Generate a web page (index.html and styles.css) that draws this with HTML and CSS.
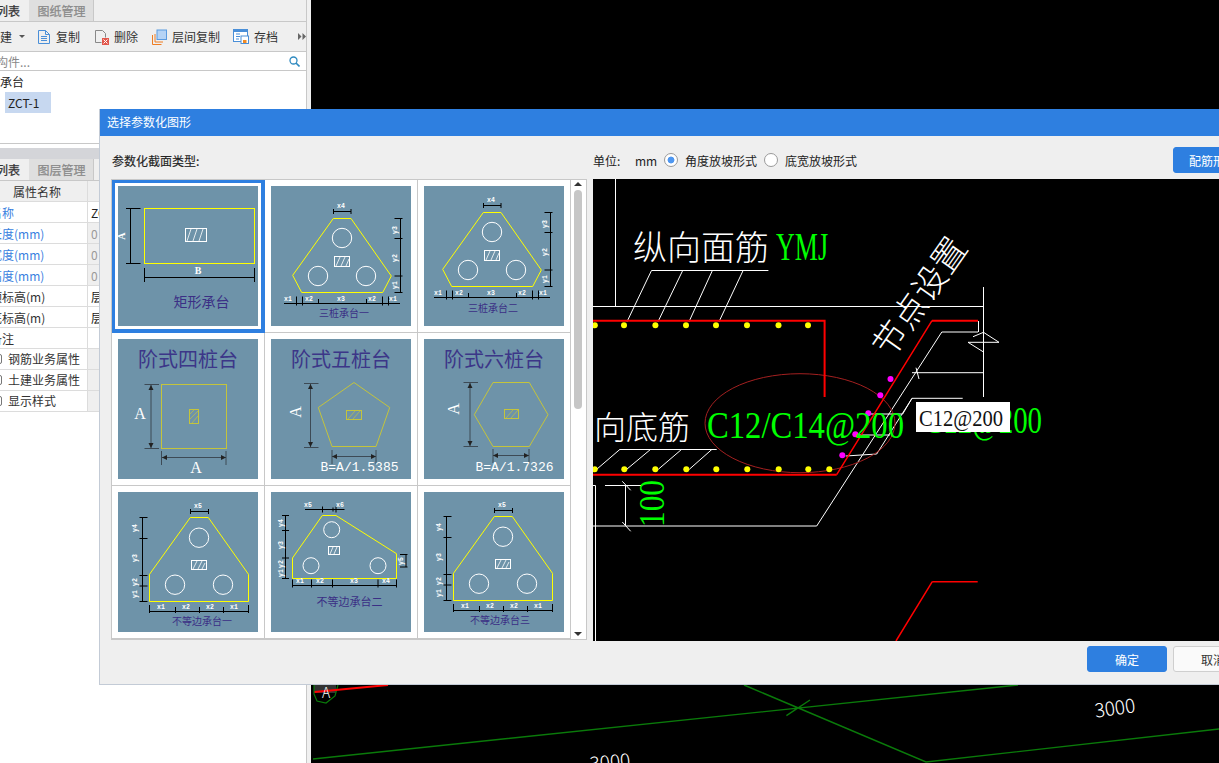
FILE: index.html
```html
<!DOCTYPE html>
<html lang="zh-CN">
<head>
<meta charset="utf-8">
<title>选择参数化图形</title>
<link rel="stylesheet" href="styles.css">
</head>
<body>
<div class="app">
  <aside class="side">
    <div class="tabs">
      <div class="tab tab-on"><span>构件列表</span></div>
      <div class="tab tab-off">图纸管理</div>
    </div>
    <div class="toolbar">
      <span class="tool tool-new">新建</span><span class="caret"></span>
      <span class="tool tool-copy">
        <svg class="ico" width="14" height="16" viewBox="0 0 14 16"><path class="i-blue" d="M1.5 1.5h7l4 4v9h-11z"/><path class="i-blue" d="M8.5 1.5v4h4M4 7.5h6M4 9.5h6M4 11.5h6"/></svg>复制</span>
      <span class="tool tool-del">
        <svg class="ico" width="15" height="16" viewBox="0 0 15 16"><path class="i-gray" d="M1.5 1.5h7l3 3v4M1.5 1.5v12h6"/><rect x="8" y="9" width="7" height="7" fill="#e2574c"/><path class="i-white" d="M9.5 10.5l4 4M13.5 10.5l-4 4"/></svg>删除</span>
      <span class="tool tool-floor">
        <svg class="ico" width="15" height="16" viewBox="0 0 15 16"><path class="i-orange" d="M.5 6v9.500h9M3 5v8h8"/><rect x="5" y="1" width="9.500" height="9.500" fill="#b5d3f5" stroke="#5b9be0"/></svg>层间复制</span>
      <span class="tool tool-save">
        <svg class="ico" width="16" height="15" viewBox="0 0 16 15"><rect x=".5" y=".5" width="14" height="12" fill="#fff" stroke="#4a8fd8"/><rect x=".5" y=".5" width="14" height="2.500" fill="#4a8fd8"/><path class="i-blue" d="M3 5h4M3 7.500h4M3 10h3"/><rect x="8" y="7" width="7.500" height="7.500" fill="#fff" stroke="#4a8fd8"/><rect x="10" y="11" width="3.500" height="3" fill="#f08a24"/></svg>存档</span>
      <svg class="more" width="8" height="7" viewBox="0 0 8 7"><path d="M0 0l3.500 3.500L0 7zM4.500 0L8 3.500 4.500 7z" fill="#666"/></svg>
    </div>
    <div class="search">
      <span class="placeholder">构件...</span>
      <svg class="search-ico" width="11" height="11" viewBox="0 0 11 11"><circle cx="4.500" cy="4.500" r="3.500" fill="none" stroke="#2f8ac0" stroke-width="1.300"/><path d="M7 7l3.500 3.500" stroke="#2f8ac0" stroke-width="1.600"/></svg>
    </div>
    <div class="tree">
      <div class="tree-root">承台</div>
      <div class="tree-item">ZCT-1</div>
    </div>
    <div class="spacer"></div>
    <div class="graybar"></div>
    <div class="tabs tabs-2">
      <div class="tab tab-on"><span>属性列表</span></div>
      <div class="tab tab-off">图层管理</div>
    </div>
    <div class="props">
      <div class="row head"><div class="k">属性名称</div><div class="v"></div></div>
      <div class="row"><div class="k blue"><span>名称</span></div><div class="v">ZCT-1</div></div>
      <div class="row"><div class="k blue"><span>长度(mm)</span></div><div class="v ro">0</div></div>
      <div class="row"><div class="k blue"><span>宽度(mm)</span></div><div class="v ro">0</div></div>
      <div class="row"><div class="k blue"><span>高度(mm)</span></div><div class="v ro">0</div></div>
      <div class="row"><div class="k"><span>顶标高(m)</span></div><div class="v">层底标高</div></div>
      <div class="row"><div class="k"><span>底标高(m)</span></div><div class="v">层底标高</div></div>
      <div class="row"><div class="k"><span>备注</span></div><div class="v"></div></div>
      <div class="row group"><div class="k"><i class="exp"></i>钢筋业务属性</div><div class="v"></div></div>
      <div class="row group"><div class="k"><i class="exp"></i>土建业务属性</div><div class="v"></div></div>
      <div class="row group"><div class="k"><i class="exp"></i>显示样式</div><div class="v"></div></div>
    </div>
  </aside>
  <div class="gutter"></div>
  <main class="canvas">
    <svg class="canvas-svg" width="908" height="763" viewBox="311 0 908 763">
      <path class="gl" d="M313 759L1018 685M744 685L926 762L1219 729M786.400 715.700L810 700"/>
      <path d="M314 685h22v8h-22z" fill="#333"/>
      <path d="M314 685v9l3 7 9 2 9-7 3-11" fill="none" stroke="#0a7a0a" stroke-width="1.200"/>
      <path d="M314.600 692L388 685" stroke="#f00" stroke-width="2" fill="none"/>
      <text class="cad-w" x="326" y="698" font-size="14" text-anchor="middle">A</text>
      <text class="cad-w" font-size="19" transform="rotate(-8 1115 709)" x="1115" y="715" text-anchor="middle">3000</text>
      <text class="cad-w" font-size="19" transform="rotate(-6 610 762)" x="610" y="769" text-anchor="middle">3000</text>
    </svg>
  </main>
</div>

<section class="dialog">
  <header class="dlg-title">选择参数化图形</header>
  <div class="dlg-head">
    <div class="dlg-label">参数化截面类型:</div>
    <div class="unit">单位:</div>
    <div class="unit-mm">mm</div>
    <label class="radio-wrap"><i class="radio radio-on"></i>角度放坡形式</label>
    <label class="radio-wrap"><i class="radio"></i>底宽放坡形式</label>
    <button class="btn btn-blue btn-right">配筋形式</button>
  </div>
  <div class="dlg-main">
    <div class="list">
      <div class="grid">
        <div class="cell selected">
          <svg class="thumb" viewBox="0 0 140 140">
            <rect class="y1" x="26.500" y="22.500" width="110" height="55"/>
            <path class="d" d="M12.500 22.500v55M8 22.500h14.500M8 77.500h14.500M26.500 91.500h110M26.500 82v14M136.500 82v14"/>
            <text class="big-l" transform="rotate(-90 7 50)" x="7" y="50" text-anchor="middle">A</text>
            <text class="big-l" x="80" y="88" text-anchor="middle">B</text>
            <rect class="wh" x="67.500" y="42.500" width="21" height="13"/>
            <path class="wt" d="M69 55l4-12M75 55l4-12M81 55l4-12"/>
            <text class="cap" x="83.500" y="121" font-size="14" text-anchor="middle">矩形承台</text>
          </svg>
        </div>
        <div class="cell">
          <svg class="thumb" viewBox="0 0 140 140">
            <use href="#tri"/>
            <text class="cap" x="73" y="131" font-size="10" text-anchor="middle">三桩承台一</text>
          </svg>
        </div>
        <div class="cell">
          <svg class="thumb" viewBox="0 0 140 140">
            <g transform="translate(-3 -6)"><use href="#tri"/></g>
            <text class="cap" x="69" y="126" font-size="10" text-anchor="middle">三桩承台二</text>
          </svg>
        </div>

        <div class="cell">
          <svg class="thumb" viewBox="0 0 140 140">
            <text class="step" x="70" y="28" text-anchor="middle">阶式四桩台</text>
            <rect class="o" x="43.500" y="45.500" width="65" height="64"/>
            <rect class="o" x="71.500" y="70.500" width="9" height="14"/>
            <path class="ot" d="M72 75l4-4M72 80l8-8M74 84l6-7"/>
            <path class="g" d="M33 46v63M26.500 45.500h14.500M26.500 109.500h14.500M44 118.500h64M43.500 112v14M108 112v14"/>
            <path class="ar" d="M33 46l-2.500 5h5zM33 109l-2.500-5h5zM44 118.500l5-2.500v5zM108 118.500l-5-2.500v5z"/>
            <text class="sf" x="22" y="80" text-anchor="middle">A</text>
            <text class="sf" x="78" y="134" text-anchor="middle">A</text>
          </svg>
        </div>
        <div class="cell">
          <svg class="thumb" viewBox="0 0 140 140">
            <text class="step" x="70" y="28" text-anchor="middle">阶式五桩台</text>
            <polygon class="o" points="83,43.500 118.700,68.500 105,107.500 61,107.500 47.300,68.500"/>
            <rect class="o" x="75.500" y="71.500" width="15" height="9"/>
            <path class="ot" d="M77 80l7-8M82 80l7-8"/>
            <path class="g" d="M39.500 45v63M33 44.500h14.500M33 108.500h14.500M61 117.500h44M61 111v14M105 111v14"/>
            <path class="ar" d="M39.500 45l-2.500 5h5zM39.500 108l-2.500-5h5zM61 117.500l5-2.500v5zM105 117.500l-5-2.500v5z"/>
            <text class="sf" transform="rotate(-90 30 73)" x="30" y="73" text-anchor="middle">A</text>
            <text class="form" x="88.500" y="132" text-anchor="middle">B=A/1.5385</text>
          </svg>
        </div>
        <div class="cell">
          <svg class="thumb" viewBox="0 0 140 140">
            <text class="step" x="70" y="28" text-anchor="middle">阶式六桩台</text>
            <polygon class="o" points="69,43.500 105.300,43.500 124,75.700 105.300,107.500 69,107.500 50.300,75.700"/>
            <rect class="o" x="80.500" y="70.500" width="14" height="9"/>
            <path class="ot" d="M82 79l7-8M87 79l7-8"/>
            <path class="g" d="M46 44v63M39.500 43.500h14.500M39.500 107.500h14.500M69 116.500h36M69 110v14M105 110v14"/>
            <path class="ar" d="M46 44l-2.500 5h5zM46 107l-2.500-5h5zM69 116.500l5-2.500v5zM105 116.500l-5-2.500v5z"/>
            <text class="sf" transform="rotate(-90 35 70)" x="35" y="70" text-anchor="middle">A</text>
            <text class="form" x="90.500" y="132" text-anchor="middle">B=A/1.7326</text>
          </svg>
        </div>

        <div class="cell">
          <svg class="thumb" viewBox="0 0 140 140">
            <use href="#uneq"/>
            <text class="cap" x="84" y="133" font-size="10" text-anchor="middle">不等边承台一</text>
          </svg>
        </div>
        <div class="cell">
          <svg class="thumb" viewBox="0 0 140 140">
            <polygon class="y1" points="51.300,23.500 65,23.500 125.500,61.700 125.500,86.500 21.500,86.500 21.500,66"/>
            <circle class="wh" cx="60.700" cy="37.700" r="8"/>
            <circle class="wh" cx="40" cy="73.700" r="8"/>
            <circle class="wh" cx="107" cy="73.700" r="8"/>
            <rect class="wh" x="57.500" y="54.500" width="11" height="8"/>
            <path class="wt" d="M59 62l3-7M63 62l3-7"/>
            <path class="d" d="M34 17.500h39.500M51.500 14.500v6M62 15.500v4M65 14.500v6M14.500 23.500v63M11 23.500h7M11 38.500h7M11 66h7M11 86.500h7M135 62.500v12.500M129 62.500h7.500M129 75h7.500M21.500 93.500h104M21.500 87.500v8M40.500 87.500v8M61.500 87.500v8M107 87.500v8M125.500 87.500v8"/>
            <text class="lbl" x="37" y="15" text-anchor="middle">x5</text>
            <text class="lbl" x="69" y="15" text-anchor="middle">x6</text>
            <text class="lbl" transform="rotate(-90 12 31)" x="12" y="31" text-anchor="middle">y4</text>
            <text class="lbl" transform="rotate(-90 12 53)" x="12" y="53" text-anchor="middle">y3</text>
            <text class="lbl" transform="rotate(-90 12 72)" x="12" y="72" text-anchor="middle">y2</text>
            <text class="lbl" transform="rotate(-90 12 81)" x="12" y="81" text-anchor="middle">y1</text>
            <text class="lbl" transform="rotate(-90 132 69)" x="132" y="69" text-anchor="middle">y5</text>
            <text class="lbl" x="29" y="91" text-anchor="middle">x1</text>
            <text class="lbl" x="49" y="91" text-anchor="middle">x2</text>
            <text class="lbl" x="83" y="91" text-anchor="middle">x3</text>
            <text class="lbl" x="115" y="91" text-anchor="middle">x4</text>
            <text class="cap" x="78.500" y="114" font-size="11" text-anchor="middle">不等边承台二</text>
          </svg>
        </div>
        <div class="cell">
          <svg class="thumb" viewBox="0 0 140 140">
            <g transform="translate(-2 -1)"><use href="#uneq"/></g>
            <text class="cap" x="76" y="132" font-size="10" text-anchor="middle">不等边承台三</text>
          </svg>
        </div>
      </div>
      <div class="scroll">
        <span class="arrow arrow-up"></span>
        <span class="thumbbar"></span>
        <span class="arrow arrow-down"></span>
      </div>
    </div>

    <div class="preview">
      <svg class="preview-svg" width="626" height="462" viewBox="593 179 626 462">
        <defs>
          <g id="tri">
            <polygon class="y1" points="62.300,32.500 80,32.500 120.300,90 111.700,106.500 30.700,106.500 21.700,89.300"/>
            <circle class="wh" cx="71" cy="52" r="9.700"/>
            <circle class="wh" cx="47" cy="90" r="9.700"/>
            <circle class="wh" cx="95" cy="90" r="9.700"/>
            <rect class="wh" x="63.500" y="70.500" width="15" height="10"/>
            <path class="wt" d="M65 80l4-9M70 80l4-9M75 80l3-7"/>
            <path class="d" d="M62.500 25.500h17.500M62.500 23v5M80 23v5M129.500 32.500v74M123.500 32.500h8M123.500 52.500h8M123.500 90h8M123.500 106.500h8M13 117.500h116M25.500 110.500v9M31.500 110.500v9M47.500 113v5M95.500 113v5M111.500 110.500v9M117.500 110.500v9"/>
            <text class="lbl" x="70" y="22" text-anchor="middle">x4</text>
            <text class="lbl" transform="rotate(-90 126 44)" x="126" y="44" text-anchor="middle">y3</text>
            <text class="lbl" transform="rotate(-90 126 72)" x="126" y="72" text-anchor="middle">y2</text>
            <text class="lbl" transform="rotate(-90 126 99)" x="126" y="99" text-anchor="middle">y1</text>
            <text class="lbl" x="17" y="115" text-anchor="middle">x1</text>
            <text class="lbl" x="38" y="115" text-anchor="middle">x2</text>
            <text class="lbl" x="70" y="115" text-anchor="middle">x3</text>
            <text class="lbl" x="101" y="115" text-anchor="middle">x2</text>
            <text class="lbl" x="122" y="115" text-anchor="middle">x1</text>
          </g>
          <g id="uneq">
            <polygon class="y1" points="72.300,25.500 90.300,25.500 130.500,82.300 130.500,109.500 31.500,109.500 31.500,82.300"/>
            <circle class="wh" cx="81" cy="45.700" r="9.700"/>
            <circle class="wh" cx="57" cy="92.700" r="9.700"/>
            <circle class="wh" cx="105" cy="92.700" r="9.700"/>
            <rect class="wh" x="73.500" y="68.500" width="15" height="9"/>
            <path class="wt" d="M75 77l4-8M80 77l4-8M84 77l3-6"/>
            <path class="d" d="M72.500 19.500h18M72.500 17v5M90.500 17v5M24.500 25.500v84M21.500 25.500h8M21.500 46.500h8M21.500 83.500h8M21.500 94h8M21.500 109.500h8M31.500 119.500h99M31.500 113v8M57.500 115v6M81.500 115v6M105.500 115v6M130.500 113v8"/>
            <text class="lbl" x="80" y="16" text-anchor="middle">x5</text>
            <text class="lbl" transform="rotate(-90 19 36)" x="19" y="36" text-anchor="middle">y4</text>
            <text class="lbl" transform="rotate(-90 19 66)" x="19" y="66" text-anchor="middle">y3</text>
            <text class="lbl" transform="rotate(-90 19 90)" x="19" y="90" text-anchor="middle">y2</text>
            <text class="lbl" transform="rotate(-90 19 102)" x="19" y="102" text-anchor="middle">y1</text>
            <text class="lbl" x="43" y="117" text-anchor="middle">x1</text>
            <text class="lbl" x="68" y="117" text-anchor="middle">x2</text>
            <text class="lbl" x="92" y="117" text-anchor="middle">x2</text>
            <text class="lbl" x="116" y="117" text-anchor="middle">x1</text>
          </g>
        </defs>

        <path class="pw" d="M615.500 179v127.500M593 306.500h390.500M983.500 287v110M651.400 270.500h117M651.400 270.700L627 321.700M682.600 270.700L658 321.700M712.300 270.700L689 321.700M743 270.700L719 321.700"/>
        <path class="pw" d="M978.500 321v11M941.800 332H978M973 336.700L983.500 332.300L999 342.300H968L983.500 352M941.800 332L816.700 526H593M912 372.700H983.500M916 367.700L919 379"/>
        <path class="pw" d="M871 414H902.700L912 398.300H962.700M912 398.300L876.700 454L845.700 456M857.700 435H890"/>
        <path class="pw" d="M620 449.500H716.700M620 449.300L596.700 469.300M650.700 449.300L626.700 469.300M681.700 449.300L658.300 469.300M712 449.300L689.300 469.300"/>
        <path class="pw" d="M605 485.500H641.700M625.500 485.500V526M622.300 481.300L630.700 490.300M622.300 522L630.700 531.300M593 485.500H595.500V641"/>

        <ellipse cx="800" cy="423.200" rx="95" ry="49.500" fill="none" stroke="#a32020"/>
        <path class="pr" d="M593 320.700H824.600V397M593 474.700H836.700M932 320.700H978"/>
        <path class="pr2" d="M836.700 474.700L932 320.700M932.300 581.700H977.700M932.300 581.700L896 641"/>

        <g class="dot-y">
          <circle cx="594.800" cy="325.300" r="3"/><circle cx="624" cy="325.300" r="3"/><circle cx="655.400" cy="325.300" r="3"/><circle cx="686" cy="325.300" r="3"/><circle cx="716" cy="325.300" r="3"/><circle cx="747" cy="325.300" r="3"/><circle cx="778.500" cy="325.300" r="3"/><circle cx="808" cy="325.300" r="3"/>
          <circle cx="594.700" cy="469.300" r="3"/><circle cx="624.300" cy="469.300" r="3"/><circle cx="655.300" cy="469.300" r="3"/><circle cx="686.300" cy="469.300" r="3"/><circle cx="716.300" cy="469.300" r="3"/><circle cx="747.300" cy="469.300" r="3"/><circle cx="778.700" cy="469.300" r="3"/><circle cx="808.300" cy="469.300" r="3"/><circle cx="829.300" cy="469.300" r="3"/>
        </g>
        <g class="dot-m">
          <circle cx="890.500" cy="379" r="3"/><circle cx="880.300" cy="395.300" r="3"/><circle cx="868.300" cy="413.300" r="3"/><circle cx="855.300" cy="434.300" r="3"/><circle cx="842.300" cy="455.300" r="3"/>
        </g>

        <text class="cad-w" x="633" y="260" font-size="34">纵向面筋</text>
        <text class="cad-g" x="776" y="260" font-size="40" textLength="52" lengthAdjust="spacingAndGlyphs">YMJ</text>
        <text class="cad-w" transform="rotate(-55 920 297)" x="920" y="309" font-size="34" text-anchor="middle">节点设置</text>
        <text class="cad-w" x="562" y="439" font-size="32">纵向底筋</text>
        <text class="cad-g" x="924" y="433" font-size="38" textLength="118" lengthAdjust="spacingAndGlyphs">C12@200</text>
        <text class="cad-g" x="707" y="438" font-size="38" textLength="197" lengthAdjust="spacingAndGlyphs">C12/C14@200</text>
        <text class="cad-g" transform="rotate(-90 664 503.500)" x="664" y="503.500" font-size="36" text-anchor="middle" textLength="47" lengthAdjust="spacingAndGlyphs">100</text>
        <rect x="916" y="402" width="94" height="30" fill="#fff"/>
        <text class="cad-k" x="919" y="426" font-size="24" textLength="84" lengthAdjust="spacingAndGlyphs">C12@200</text>
      </svg>
    </div>
  </div>
  <footer class="dlg-foot">
    <button class="btn btn-blue">确定</button>
    <button class="btn btn-plain">取消</button>
  </footer>
</section>
</body>
</html>
```

FILE: styles.css
```css
* { box-sizing: border-box; }
html, body { margin: 0; padding: 0; height: 763px; overflow: hidden; }
body {
  font-family: "Noto Sans CJK SC", "Noto Sans", sans-serif;
  font-size: 12px;
  color: #222;
  background: #000;
  position: relative;
  width: 1219px;
}
.app { display: flex; height: 763px; }

/* left panel */
.side {
  width: 307px;
  height: 763px;
  background: #fff;
  border-right: 1px solid #c8c8c8;
  display: flex;
  flex-direction: column;
  overflow: hidden;
  flex: none;
}
.gutter { width: 4px; background: #f0f0f0; flex: none; }
.canvas { flex: 1; background: #000; overflow: hidden; }
.canvas-svg { display: block; }

.tabs {
  display: flex;
  height: 22px;
  flex: none;
  background: #efefef;
  border-bottom: 1px solid #c8c8c8;
}
.tabs-2 { border-bottom: 1px solid #c8c8c8; }
.tab { height: 21px; line-height: 21px; white-space: nowrap; overflow: hidden; }
.tab-on {
  width: 29px;
  display: flex;
  justify-content: flex-end;
  padding-right: 8px;
  flex: none;
  border-right: 1px solid #efefef;
  color: #333;
  -webkit-text-stroke: .25px #333;
}
.tab-on span { flex: none; }
.tab-off {
  width: 65px;
  padding-left: 1px;
  text-align: center;
  background: #dfdfdf;
  color: #8a8a8a;
  border-right: 1px solid #c8c8c8;
  -webkit-text-stroke: .25px #8a8a8a;
}

.toolbar {
  height: 30px;
  flex: none;
  background: #efefef;
  border-bottom: 1px solid #c8c8c8;
  display: flex;
  align-items: center;
  color: #333;
  white-space: nowrap;
}
.tool { display: flex; align-items: center; flex: none; }
.tool-new { margin-left: -12px; }
.caret {
  width: 0; height: 0;
  margin-left: 7px;
  border-left: 3px solid transparent;
  border-right: 3px solid transparent;
  border-top: 3px solid #555;
}
.ico { flex: none; margin-right: 5px; }
.tool-copy { margin-left: 12px; }
.tool-del { margin-left: 14px; }
.tool-floor { margin-left: 14px; }
.tool-save { margin-left: 13px; }
.more { margin-left: 20px; flex: none; }
.i-blue { fill: none; stroke: #4a8fd8; }
.i-gray { fill: none; stroke: #888; }
.i-white { fill: none; stroke: #fff; }
.i-orange { fill: none; stroke: #ee7d22; }

.search {
  height: 19px;
  flex: none;
  border-bottom: 1px solid #c8c8c8;
  display: flex;
  align-items: center;
  justify-content: space-between;
  padding-right: 6px;
  background: #fff;
}
.placeholder { margin-left: -4px; color: #888; }
.search-ico { display: block; }

.tree { height: 73px; flex: none; border-bottom: 1px solid #c8c8c8; padding-top: 1px; }
.tree-root { height: 20px; line-height: 20px; color: #222; }
.tree-item {
  width: 46px;
  height: 21px;
  margin-left: 5px;
  line-height: 21px;
  padding-left: 3px;
  background: #c7d8f0;
  white-space: nowrap;
}
.spacer { height: 4px; flex: none; background: #fff; }
.graybar { height: 11px; flex: none; background: #d4d5d9; }

.props { flex: none; }
.row {
  display: grid;
  grid-template-columns: 88px 1fr;
  height: 21px;
  line-height: 22px;
  border-bottom: 1px solid #dcdcdc;
  white-space: nowrap;
}
.k { border-right: 1px solid #dcdcdc; overflow: hidden; color: #333; }
.k span { display: block; margin-left: -10px; }
.v { padding-left: 3px; overflow: hidden; color: #222; }
.blue { color: #3a7fe0; }
.ro { background: #efefef; color: #999; }
.head { background: #efefef; }
.head .k { padding-left: 13px; }
.group .k { display: flex; align-items: center; }
.group .v { background: #efefef; }
.exp {
  display: block;
  width: 10px;
  height: 10px;
  margin: 0 6px 0 -8px;
  flex: none;
  border: 1px solid #777;
  border-radius: 2px;
}

/* dialog */
.dialog {
  position: absolute;
  left: 99px;
  top: 109px;
  width: 1167px;
  height: 576px;
  background: #efefef;
  border: 1px solid #c3cbd6;
  border-top: 0;
  display: flex;
  flex-direction: column;
}
.dlg-title {
  height: 27px;
  flex: none;
  background: #2e7fe0;
  color: #fff;
  line-height: 26px;
  padding-left: 7px;
}
.dlg-head {
  height: 43px;
  flex: none;
  display: flex;
  align-items: center;
  padding: 5px 12px 0 12px;
  color: #222;
}
.dlg-label { width: 481px; flex: none; -webkit-text-stroke: .15px #222; }
.unit { width: 42px; flex: none; }
.unit-mm { width: 29px; flex: none; }
.radio-wrap { display: flex; align-items: center; margin-right: 7px; }
.radio {
  display: block;
  width: 14px;
  height: 14px;
  margin-right: 7px;
  border-radius: 50%;
  background: #fff;
  border: 1px solid #9a9a9a;
}
.radio-on { background: radial-gradient(circle, #4f97f0 0, #4f97f0 3px, #fff 3.800px); }
.btn {
  width: 80px;
  height: 26px;
  flex: none;
  border-radius: 3px;
  font: inherit;
  padding: 0;
}
.btn-blue { background: #2e7fe0; color: #fff; border: 1px solid #2e7fe0; }
.btn-plain { background: #fafafa; color: #333; border: 1px solid #cfcfcf; }
.btn-right { margin-left: auto; }

.dlg-main { display: flex; flex: none; height: 462px; padding-left: 11px; gap: 6px; }
.list {
  width: 476px;
  height: 461px;
  flex: none;
  display: flex;
  background: #fff;
  border: 1px solid #c8c8c8;
}
.grid {
  display: grid;
  grid-template-columns: repeat(3, 153px);
  grid-auto-rows: 153px;
  width: 459px;
  flex: none;
  overflow: hidden;
}
.cell {
  padding: 6px;
  border-right: 1px solid #c8c8c8;
  border-bottom: 1px solid #c8c8c8;
  background: #fff;
}
.selected { border-color: #2e7fe0; box-shadow: inset 0 0 0 3px #2e7fe0; }
.thumb { display: block; width: 140px; height: 140px; background: #6e93a9; }

.y1 { fill: none; stroke: #ff0; stroke-width: 1; }
.d { fill: none; stroke: #000; stroke-width: 1; }
.wh { fill: none; stroke: #fff; stroke-width: 1; }
.wt { fill: none; stroke: #fff; stroke-width: .8; }
.o { fill: none; stroke: #c4c43c; stroke-width: 1; }
.ot { fill: none; stroke: #c4c43c; stroke-width: .7; }
.g { fill: none; stroke: #3d4a55; stroke-width: 1; }
.ar { fill: #222; }
.big-l { fill: #fff; font-family: "Liberation Serif", serif; font-size: 10px; font-weight: bold; }
.cap { fill: #3b2f85; font-family: "Noto Sans CJK SC", sans-serif; }
.step { fill: #3c3688; font-family: "Noto Sans CJK SC", sans-serif; font-size: 20px; }
.sf { fill: #fff; font-family: "Liberation Serif", serif; font-size: 16px; }
.form { fill: #fff; font-family: "Liberation Mono", monospace; font-size: 13px; }
.lbl { fill: #fff; font-family: "Liberation Mono", monospace; font-size: 6.500px; font-weight: bold; }

.scroll { flex: 1; position: relative; background: #fff; }
.thumbbar {
  position: absolute;
  left: 3px;
  top: 10px;
  width: 8px;
  height: 219px;
  background: #c6c6c6;
  border-radius: 4px;
}
.arrow { position: absolute; left: 3px; width: 0; height: 0; border-left: 4px solid transparent; border-right: 4px solid transparent; }
.arrow-up { top: 2px; border-bottom: 4px solid #333; }
.arrow-down { bottom: 3px; border-top: 4px solid #333; }

.preview { flex: 1; height: 462px; background: #000; overflow: hidden; }
.preview-svg { display: block; }
.pw { fill: none; stroke: #fff; stroke-width: 1; }
.pr { fill: none; stroke: #f00; stroke-width: 2; }
.pr2 { fill: none; stroke: #f00; stroke-width: 1.500; }
.dot-y { fill: #ff0; }
.dot-m { fill: #f0f; }
.cad-w { fill: #fff; font-family: "Noto Sans CJK SC", sans-serif; font-weight: 300; }
.cad-g { fill: #0f0; font-family: "Liberation Serif", serif; }
.cad-k { fill: #111; font-family: "Liberation Serif", serif; }
.gl { fill: none; stroke: #0a7a0a; stroke-width: 1.400; }

.dlg-foot {
  flex: 1;
  display: flex;
  justify-content: flex-end;
  gap: 6px;
  padding: 5px 12px 0 0;
  align-items: flex-start;
}
```
